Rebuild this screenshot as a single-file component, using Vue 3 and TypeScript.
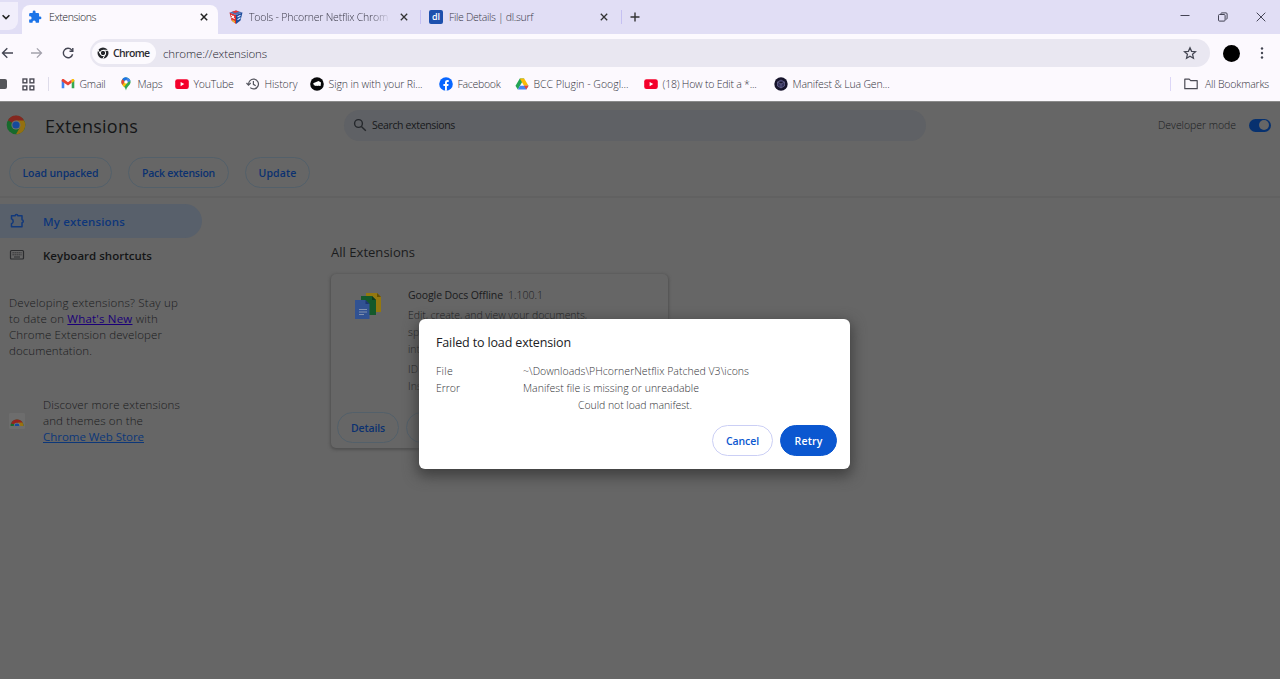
<script setup lang="ts">
import type { Directive } from 'vue'

interface Bookmark {
  icon: string
  label: string
  width: number
}

const bookmarks: Bookmark[] = [
  { icon: 'gmail', label: 'Gmail', width: 26 },
  { icon: 'maps', label: 'Maps', width: 25 },
  { icon: 'youtube', label: 'YouTube', width: 40 },
  { icon: 'history', label: 'History', width: 33 },
  { icon: 'riot', label: 'Sign in with your Ri...', width: 94 },
  { icon: 'facebook', label: 'Facebook', width: 43 },
  { icon: 'drive', label: 'BCC Plugin - Googl...', width: 95 },
  { icon: 'youtube', label: '(18) How to Edit a *...', width: 94 },
  { icon: 'lua', label: 'Manifest & Lua Gen...', width: 97 },
]

// Tracks a label's letters so that it fills the given width.
const vFit: Directive<HTMLElement, number> = {
  mounted(el, { value }) {
    const length = (el.textContent ?? '').length
    el.style.letterSpacing = `${(value - el.getBoundingClientRect().width) / length}px`
  },
}
</script>

<template>
  <div class="browser">
    <div class="tabstrip">
      <div class="tabsearch">
        <svg width="10" height="10" viewBox="0 0 10 10"><path d="M1.6 3.2 5 6.6 8.4 3.2" fill="none" stroke="#222" stroke-width="1.6" /></svg>
      </div>
      <div class="tab active">
        <svg class="fav" width="14" height="14" viewBox="0 0 24 24"><path fill="#1a73e8" d="M20.5 11H19V7a2 2 0 0 0-2-2h-4V3.5a2.5 2.5 0 0 0-5 0V5H4a2 2 0 0 0-2 2v3.8h1.5a2.7 2.7 0 0 1 0 5.4H2V20a2 2 0 0 0 2 2h3.800v-1.500a2.700 2.700 0 0 1 5.400 0V22H17a2 2 0 0 0 2-2v-4h1.500a2.500 2.500 0 0 0 0-5z" /></svg>
        <span class="tablabel"><span v-fit="47" class="t">Extensions</span></span>
        <svg class="x" width="8" height="8" viewBox="0 0 8 8"><path d="M.8.8l6.400 6.400M7.200.8.8 7.200" stroke="#222" stroke-width="1.500" /></svg>
      </div>
      <div class="tab second">
        <svg class="fav" width="14" height="14" viewBox="0 0 14 14">
          <path d="M.5 2.500 7 5v9L2.500 10.500z" fill="#d92b2b" /><path d="M13.500 2.500 7 5v9l4.500-3.500z" fill="#1d4c9c" />
          <path d="M.5 2.500 7 .5l6.500 2L7 5z" fill="#526fb0" /><path d="M3 1.800 7 .5l3 .9-4 1.700z" fill="#e33" />
          <path d="M2.300 5 5.500 9M5 6 2.500 8" stroke="#fff" stroke-width="1.200" /><path d="M8.500 7 11.500 5.200M8.500 9.800l3-2" stroke="#d8e4ff" stroke-width="1.200" /><path d="M3 9.500 6 11v2L3.500 11.500z" fill="#edb72c" />
        </svg>
        <span class="tablabel fade"><span v-fit="139" class="t">Tools - Phcorner Netflix Chrom</span></span>
        <svg class="x" width="8" height="8" viewBox="0 0 8 8"><path d="M.8.8l6.400 6.400M7.200.8.8 7.200" stroke="#333" stroke-width="1.300" /></svg>
      </div>
      <div class="tab third">
        <span class="dl">dl</span>
        <span class="tablabel"><span v-fit="84" class="t">File Details | dl.surf</span></span>
        <svg class="x" width="8" height="8" viewBox="0 0 8 8"><path d="M.8.8l6.400 6.400M7.200.8.8 7.200" stroke="#333" stroke-width="1.300" /></svg>
      </div>
      <div class="newtab">
        <svg width="10" height="10" viewBox="0 0 10 10"><path d="M5 .5v9M.5 5h9" stroke="#333" stroke-width="1.400" /></svg>
      </div>
      <div class="wincontrols">
        <svg width="10" height="10" viewBox="0 0 10 10"><path d="M.5 3.500h9" stroke="#445" /></svg>
        <svg width="10" height="10" viewBox="0 0 10 10" fill="none" stroke="#445"><rect x=".5" y="2.500" width="6.600" height="6.600" rx="1" /><path d="M3 2.200V1.500Q3 .9 3.600.9H8q1.100 0 1.100 1.100v4.400q0 .8-1.300.9" /></svg>
        <svg width="10" height="10" viewBox="0 0 10 10"><path d="M.7.7l8.600 8.600M9.300.7.7 9.300" stroke="#445" /></svg>
      </div>
    </div>

    <div class="toolbar">
      <svg class="nav back" width="12" height="12" viewBox="0 0 12 12" fill="none" stroke="#444653" stroke-width="1.400"><path d="M12 6H1.600M6.300 1.200 1.500 6l4.800 4.800" /></svg>
      <svg class="nav" width="12" height="12" viewBox="0 0 12 12" fill="none" stroke="#a3a2ac" stroke-width="1.300"><path d="M0 6h10.400M5.900 1.400 10.500 6l-4.600 4.600" /></svg>
      <svg class="nav reload" width="12" height="12" viewBox="0 0 12 12" fill="none" stroke="#444653" stroke-width="1.400"><path d="M10.600 7.200A4.700 4.700 0 1 1 9.600 2.900L10.600 4.100" /><path d="M10.800 1v3.300H7.500" /></svg>
      <div class="omnibox">
        <div class="chip">
          <svg width="12" height="12" viewBox="0 0 24 24"><circle cx="12" cy="12" r="11" fill="#25272b" /><circle cx="12" cy="12" r="5.400" fill="none" stroke="#fff" stroke-width="2" /><path d="M12 6.600h10.500M7.300 14.700 2 5.600M16.700 14.700 11.600 23.500" stroke="#fff" stroke-width="2" /></svg>
          <span v-fit="36.500" class="t">Chrome</span>
        </div>
        <span v-fit="104" class="t url">chrome://extensions</span>
        <svg class="star" width="14" height="14" viewBox="0 0 24 24"><path d="m12 3 2.700 6.200 6.800.6-5.100 4.500 1.500 6.600L12 17.400l-5.900 3.500 1.500-6.600L2.500 9.800l6.800-.6z" fill="none" stroke="#444653" stroke-width="2.200" /></svg>
      </div>
      <div class="avatar"></div>
      <svg class="kebab" width="4" height="14" viewBox="0 0 4 14" fill="#444653"><circle cx="2" cy="2.500" r="1.200" /><circle cx="2" cy="7" r="1.200" /><circle cx="2" cy="11.500" r="1.200" /></svg>
    </div>

    <div class="bookbar">
      <div class="stub"></div>
      <svg class="apps" width="13" height="13" viewBox="0 0 13 13" fill="none" stroke="#4b4b55" stroke-width="1.400"><rect x="1" y="1" width="3.800" height="3.800" /><rect x="8" y="1" width="3.800" height="3.800" /><rect x="1" y="8" width="3.800" height="3.800" /><rect x="8" y="8" width="3.800" height="3.800" /></svg>
      <div class="divider"></div>
      <div class="marks">
        <div v-for="b in bookmarks" :key="b.label" class="mark">
          <svg v-if="b.icon === 'gmail'" width="14" height="14" viewBox="0 0 14 14"><path d="M.7 3v8.300h2.600V5z" fill="#4285f4" /><path d="M13.300 3v8.300h-2.600V5z" fill="#34a853" /><path d="M.7 3.400C.7 2 2.200 1.700 3.300 2.500L7 5.300l3.700-2.800v3.300L7 8.600.7 4.200z" fill="#ea4335" /><path d="M10.700 2.500c1.100-.8 2.600-.5 2.600.9v.7l-2.600 1.900z" fill="#fbbc04" /></svg>
          <svg v-else-if="b.icon === 'maps'" width="14" height="14" viewBox="0 0 14 14"><path d="M7 .5A4.600 4.600 0 0 0 2.400 5c0 3.200 3.700 4 4.600 8.600.9-4.600 4.600-5.400 4.600-8.600A4.600 4.600 0 0 0 7 .5z" fill="#34a853" /><path d="M7 5 3.200 2.200A4.600 4.600 0 0 1 8.500.7z" fill="#1a73e8" /><path d="M3.200 2.200 6 4.500 3.300 7.900C2.200 6.400 1.900 4 3.200 2.200z" fill="#ea4335" /><path d="m3.300 7.900 5-6C10.500 2.800 7.500 7 5 10z" fill="#fbbc04" /><path d="M8.500.7A4.600 4.600 0 0 1 11.500 4L8.300 5.500 7 4z" fill="#4285f4" /><circle cx="7" cy="4.900" r="1.700" fill="#fff" /></svg>
          <svg v-else-if="b.icon === 'youtube'" width="14" height="14" viewBox="0 0 14 14"><rect x=".2" y="2.200" width="13.600" height="9.800" rx="2.300" fill="#f4002b" /><path d="m5.600 5 3.700 2.100-3.700 2.100z" fill="#fff" /></svg>
          <svg v-else-if="b.icon === 'history'" width="14" height="14" viewBox="0 0 14 14" fill="none" stroke="#55565f" stroke-width="1.200"><path d="M2.700 7.800A4.900 4.900 0 1 1 4.200 10.600" /><path d="M7.400 4v3.300l2.300 1.400" /><path d="m.5 6 2 2.200 2.200-2.200" /></svg>
          <svg v-else-if="b.icon === 'riot'" width="14" height="14" viewBox="0 0 14 14"><circle cx="7" cy="7" r="6.800" fill="#08080a" /><path d="M3.200 6.200 8.500 4l2.500 1.500-.4 3.600H9.200L9 7.500l-.4 1.600H7.200L7 7.600l-.3 1.500H5.300L5 7.500l-.3 1H4z" fill="#fff" /></svg>
          <svg v-else-if="b.icon === 'facebook'" width="14" height="14" viewBox="0 0 14 14"><circle cx="7" cy="7" r="6.800" fill="#0866ff" /><path d="M6 13.800V9H4.400V7H6V5.700C6 3.700 7.100 3 8.600 3l1.100.1v1.800h-.8c-.8 0-1 .4-1 1V7h1.700l-.3 2H7.900v4.800z" fill="#fff" /></svg>
          <svg v-else-if="b.icon === 'drive'" width="14" height="14" viewBox="0 0 14 14"><path d="M4.800 1.400h4.400L7 5.300 2.800 12.500.5 8.800z" fill="#23a455" /><path d="M4.800 1.400h4.400l4.300 7.400H9z" fill="#fbbc04" /><path d="M2.800 12.500 5 8.800h8.500l-2.200 3.700z" fill="#4285f4" /><path d="M9 8.800h4.500l-2.200 3.700z" fill="#ea4335" /></svg>
          <svg v-else width="14" height="14" viewBox="0 0 14 14"><circle cx="7" cy="7" r="6.700" fill="#17142c" /><path d="m7 3 3.500 2v4L7 11 3.500 9V5zM3.500 5 7 7l3.500-2M7 7v4" fill="#34315a" stroke="#77749f" stroke-width=".6" /></svg>
          <span v-fit="b.width" class="t">{{ b.label }}</span>
        </div>
      </div>
      <div class="allmarks">
        <svg width="14" height="12" viewBox="0 0 14 12"><path d="M.8 1.200h4.400l1.500 1.500h6.500v8H.8z" fill="none" stroke="#4b4b55" stroke-width="1.200" stroke-linejoin="round" /></svg>
        <span v-fit="64" class="t">All Bookmarks</span>
      </div>
    </div>

    <div class="page">
      <header class="head">
        <svg class="logo" width="20" height="20" viewBox="0 0 20 20"><circle cx="10" cy="10" r="9.300" fill="#176a2c" /><path d="M10 10 1.900 5.300A9.300 9.300 0 0 1 18.100 5.400z" fill="#85271f" /><path d="M10 5.400h8.100A9.300 9.300 0 0 1 10 19.300l4-7z" fill="#947010" /><circle cx="10" cy="10" r="4.600" fill="#727272" /><circle cx="10" cy="10" r="3.600" fill="#174a9c" /></svg>
        <h1><span v-fit="93" class="t">Extensions</span></h1>
        <div class="search">
          <svg width="14" height="14" viewBox="0 0 14 14" fill="none" stroke="#24272b" stroke-width="1.400"><circle cx="5.500" cy="5.500" r="3.900" /><path d="m8.400 8.400 4.400 4.400" /></svg>
          <span v-fit="83" class="t">Search extensions</span>
        </div>
        <span class="dev"><span v-fit="78" class="t">Developer mode</span></span>
        <div class="toggle"><i></i></div>
      </header>
      <div class="actions">
        <div class="pill load"><span v-fit="76" class="t">Load unpacked</span></div>
        <div class="pill pack"><span v-fit="73" class="t">Pack extension</span></div>
        <div class="pill update"><span v-fit="38" class="t">Update</span></div>
      </div>
      <div class="content">
        <aside class="side">
          <div class="item selected">
            <svg width="16" height="16" viewBox="0 0 16 16" fill="none" stroke="#12397b" stroke-width="1.500"><path d="M2.500 2.700h3.700q0-1.300 1.300-1.300t1.300 1.300H13v4q1.300.2 1.300 1.500T13 9.700v4H2.500v-3q1.700-.6 1.700-2.500T2.500 5.700z" stroke-linejoin="round" /></svg>
            <span v-fit="82" class="t">My extensions</span>
          </div>
          <div class="item">
            <svg width="16" height="16" viewBox="0 0 16 16" fill="none" stroke="#2b2c2e"><rect x="1.500" y="3.500" width="13" height="8.500" rx="1" stroke-width="1.200" /><path d="M3.500 5.800h9M3.500 7.800h9" stroke-dasharray="1.300 .7" /><path d="M5 10h6" /></svg>
            <span v-fit="109" class="t">Keyboard shortcuts</span>
          </div>
          <div class="note">
            <div><span v-fit="169" class="t">Developing extensions? Stay up</span></div>
            <div><span v-fit="149" class="t">to date on <a class="visited">What's New</a> with</span></div>
            <div><span v-fit="153" class="t">Chrome Extension developer</span></div>
            <div><span v-fit="83" class="t">documentation.</span></div>
          </div>
          <div class="store">
            <svg width="16" height="16" viewBox="0 0 16 16"><rect width="16" height="16" rx="1" fill="#6d6d6d" /><path d="M1.500 13a6.500 6.500 0 0 1 13 0z" fill="#176a2c" /><path d="M2 10.500a6.500 6.500 0 0 1 12 0L8 12z" fill="#96231c" /><path d="M9 9.500h4.500q1 1.500 1 3.500H10z" fill="#987311" /><path d="M4.800 13a3.200 3.200 0 0 1 6.400 0z" fill="#777" /><path d="M5.600 13a2.400 2.400 0 0 1 4.800 0z" fill="#174a9c" /></svg>
            <div>
              <div><span v-fit="137" class="t">Discover more extensions</span></div>
              <div><span v-fit="100" class="t">and themes on the</span></div>
              <div><span v-fit="101" class="t"><a>Chrome Web Store</a></span></div>
            </div>
          </div>
        </aside>
        <main>
          <h2><span v-fit="84" class="t">All Extensions</span></h2>
          <div class="card">
            <div class="cardtop">
              <svg width="28" height="28" viewBox="0 0 28 28"><path d="M12 1h11l4 4v15H12z" fill="#94780f" /><path d="m23 1 4 4h-4z" fill="#665000" /><path d="M7 4h11l4 4v15H7z" fill="#14592b" /><path d="m18 4 4 4h-4z" fill="#0b3b1b" /><path d="M1 8h10.500l4 4v15H1z" fill="#315292" /><path d="m11.500 8 4 4h-4z" fill="#1d3770" /><path d="M5 17.500h8M5 20h8M5 22.500h5" stroke="#8291ad" /></svg>
              <div class="info">
                <div class="name"><span v-fit="95" class="t">Google Docs Offline</span><span v-fit="35" class="t version">1.100.1</span></div>
                <div class="desc">
                  <div><span v-fit="179" class="t">Edit, create, and view your documents,</span></div>
                  <div>sp</div>
                  <div>int</div>
                </div>
                <div class="meta">
                  <div>ID</div>
                  <div>Ins</div>
                </div>
              </div>
            </div>
            <div class="cardactions">
              <div class="pill"><span v-fit="34" class="t">Details</span></div>
              <div class="pill"></div>
            </div>
          </div>
        </main>
      </div>
    </div>

    <div class="dialog">
      <h3><span v-fit="135" class="t">Failed to load extension</span></h3>
      <dl>
        <dt><span v-fit="17" class="t">File</span></dt>
        <dd><span v-fit="226" class="t">~\Downloads\PHcornerNetflix Patched V3\icons</span></dd>
        <dt><span v-fit="24" class="t">Error</span></dt>
        <dd><span v-fit="176" class="t">Manifest file is missing or unreadable</span></dd>
        <dd class="detail"><span v-fit="114" class="t">Could not load manifest.</span></dd>
      </dl>
      <div class="buttons">
        <div class="pill cancel"><span v-fit="33" class="t">Cancel</span></div>
        <div class="pill retry"><span v-fit="28" class="t">Retry</span></div>
      </div>
    </div>
  </div>
</template>

<style>
body { margin: 0; overflow: hidden; }
</style>

<style scoped>
* { box-sizing: border-box; }
.browser {
  position: relative; width: 1280px; height: 679px; overflow: hidden;
  display: flex; flex-direction: column; background: #fcf9fe;
  font-family: "Open Sans", "Noto Sans", sans-serif; font-size: 10.500px; font-weight: 300; color: #33333c;
}
svg { display: block; flex: none; }
.t { display: inline-block; white-space: nowrap; }
.tabstrip { height: 34px; background: #e1def5; display: flex; flex: none; color: #3a3947; }
.tabsearch { width: 18px; background: #f1eefb; border-radius: 0 0 9px 0; display: flex; align-items: center; padding-left: 1px; height: 28px; margin: 2px 4px 0 0; padding-top: 1px; }
.tab { display: flex; align-items: center; position: relative; }
.tab .x { margin-left: auto; }
.active { width: 196px; background: #fcf9fe; border-radius: 8px 8px 0 0; margin-top: 5px; padding: 0 10px 6px 6px; color: #16161c; }
.active .fav { margin-right: 7px; }
.second { width: 203px; padding: 0 13px 1px 11px; }
.second .fav { margin-right: 6px; }
.third { width: 214px; padding: 0 27px 1px 8px; }
.third::before, .third::after { content: ""; width: 1px; height: 14px; background: #c5c0f2; position: absolute; left: -1px; top: 10px; }
.third::after { left: 200px; }
.fade { -webkit-mask-image: linear-gradient(90deg, #000 88%, transparent 102%); mask-image: linear-gradient(90deg, #000 88%, transparent 102%); }
.dl { width: 14px; height: 14px; border-radius: 2px; background: #1d50ad; color: #fff; font-size: 9px; line-height: 13px; text-align: center; font-weight: 600; margin-right: 6px; }
.newtab { width: 20px; height: 33px; display: flex; align-items: center; }
.newtab svg { margin-left: -5px; }
.wincontrols { margin-left: auto; display: flex; gap: 28px; padding: 12px 14px 0 0; }

.toolbar { height: 38px; display: flex; align-items: center; flex: none; }
.nav { margin-right: 17px; }
.back { margin-left: 1px; margin-right: 18px; }
.reload { margin-left: 2px; margin-right: 16px; }
.omnibox { width: 1120px; height: 28px; border-radius: 14px; background: #e9e7f1; display: flex; align-items: center; padding-left: 2px; }
.chip { height: 22px; width: 64px; border-radius: 12px; background: #fcfafe; display: flex; align-items: center; gap: 4px; padding-left: 5px; font-weight: 600; color: #2c2c33; }
.url { font-size: 11.500px; margin-left: 7px; color: #26262f; }
.star { margin-left: auto; margin-right: 13px; }
.avatar { width: 17px; height: 17px; border-radius: 50%; background: #000; margin-left: 13px; }
.kebab { margin-left: 20px; }

.bookbar { height: 29px; display: flex; align-items: center; flex: none; padding-bottom: 5px; }
.stub { width: 7px; height: 10px; background: #55565a; border-radius: 0 2px 2px 0; }
.apps { margin-left: 15px; }
.divider { width: 1px; height: 14px; background: #dedcea; margin-left: 13px; }
.marks { display: grid; grid-template-columns: 58px 56px 71px 64px 129px 76px 129px 130px 120px; margin-left: 12px; }
.mark { display: flex; align-items: center; gap: 4.500px; white-space: nowrap; }
.allmarks { display: flex; align-items: center; margin-left: auto; gap: 7px; padding-left: 13px; margin-right: 11px; border-left: 1px solid #dcd6f7; height: 14px; }

.page { flex: 1; min-height: 0; background: #666; color: #1a1b1d; font-size: 11.500px; border-top: 1px solid #8a8a8a; }
.head { height: 48px; display: flex; align-items: center; padding: 0 0 2px 6px; }
h1 { margin: 0 0 0 19px; width: 299px; font-size: 18px; font-weight: 500; line-height: 26px; color: #151617; padding-top: 2px; }
.search { width: 582px; height: 31px; border-radius: 16px; background: #5f6165; display: flex; align-items: center; gap: 4px; padding: 0 0 1px 9px; font-size: 10.500px; font-weight: 500; color: #17191b; }
.search svg { margin: 1px 1px 0 0; }
.dev { margin-left: 232px; font-size: 10.500px; }
.toggle { margin-left: 13px; width: 22px; height: 13px; border-radius: 7px; background: #07316f; padding: 1.500px 2px 0 10px; }
.toggle i { display: block; width: 10px; height: 10px; border-radius: 50%; background: #666; }
.actions { height: 48px; display: flex; padding: 7px 0 0 9px; gap: 16px; border-bottom: 2px solid #616161; }
.pill { height: 31px; border: 1px solid #53606a; border-radius: 16px; display: flex; align-items: center; justify-content: center; font-weight: 600; font-size: 10.500px; color: #0b3170; flex: none; padding-top: 1px; }
.load { width: 103px; }
.pack { width: 101px; }
.update { width: 65px; }
.content { display: flex; }
.side { width: 331px; padding-top: 6px; }
.item { display: flex; align-items: center; height: 34px; width: 202px; padding-left: 9px; gap: 18px; font-weight: 600; font-size: 11.500px; color: #141516; }
.selected { background: #58606b; border-radius: 0 17px 17px 0; color: #0e367a; }
.note { margin: 23px 0 0 9px; line-height: 16px; }
.store { display: flex; align-items: center; margin: 38px 0 0 9px; gap: 18px; line-height: 16px; }
a { color: #0c3779; text-decoration: underline; font-weight: 400; }
.visited { color: #1a0078; }
main { padding-top: 43px; }
h2 { margin: 0; font-size: 13px; line-height: 22px; font-weight: 500; color: #1b1c1d; }
.card { margin-top: 11px; width: 337px; height: 174px; border-radius: 5px; background: #666; box-shadow: 0 1px 3px 1px #505050; overflow: hidden; white-space: nowrap; display: flex; flex-direction: column; }
.cardtop { display: flex; padding: 18px 0 0 23px; gap: 26px; flex: 1; font-size: 10.500px; }
.info { margin-top: -5px; }
.name { line-height: 17px; font-weight: 400; }
.version { margin-left: 5px; font-weight: 300; }
.desc { margin-top: 3px; line-height: 17px; }
.meta { margin-top: 3px; line-height: 17px; }
.cardactions { display: flex; gap: 7px; padding: 0 0 5px 6px; }
.cardactions .pill { width: 62px; }

.dialog { position: absolute; left: 419px; top: 319px; width: 431px; height: 150px; background: #fff; border-radius: 6px; padding: 14px 13px 0 17px; box-shadow: 0 5px 14px 2px #3f3f3f; color: #333437; }
h3 { margin: 0; font-size: 12.500px; line-height: 19px; font-weight: 500; color: #202124; }
dl { margin: 11px 0 0; display: grid; grid-template-columns: 87px 1fr; line-height: 17px; font-size: 10.500px; }
dd { margin: 0; }
.detail { grid-column: 2; padding-left: 55px; }
.buttons { display: flex; justify-content: flex-end; gap: 7px; margin-top: 11px; }
.cancel { width: 61px; border-color: #cbcff5; color: #0b57d0; }
.retry { width: 57px; background: #0b57d0; border-color: #0b57d0; color: #fff; }
</style>
